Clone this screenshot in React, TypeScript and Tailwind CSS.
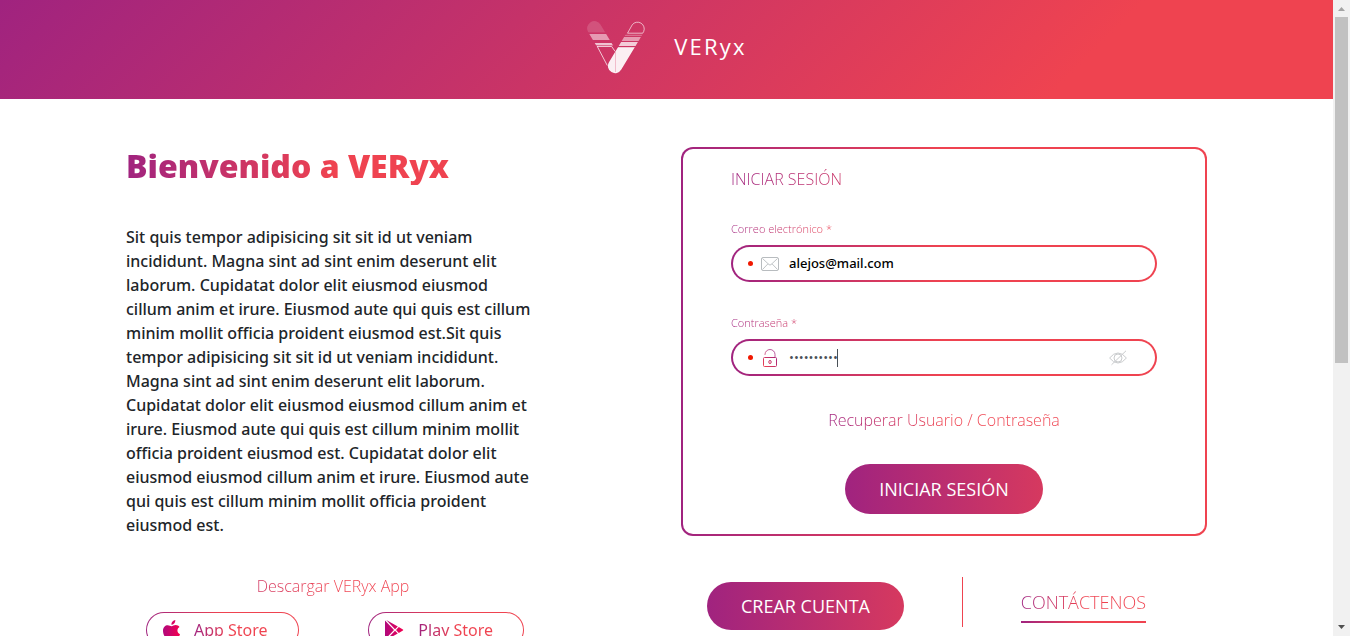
import { ReactNode } from "react";

const gradientText =
  "bg-[linear-gradient(90deg,#a0237f_0%,#ef4350_50%)] bg-clip-text text-transparent";
const gradientBorder =
  "border-transparent [background:linear-gradient(#fff,#fff)_padding-box,linear-gradient(90deg,#a0237f_0%,#ef4350_50%)_border-box]";
const pill =
  "rounded-full bg-[linear-gradient(90deg,#a0237f_0%,#d6395f_100%)] text-lg text-white";

function Logo() {
  return (
    <svg width="60" height="54" viewBox="586 20 60 54" fill="#fff" aria-hidden="true">
      <defs>
        <clipPath id="leftArm">
          <rect x="-7.2" y="-7.2" width="14.4" height="58" rx="7.2" transform="translate(594.3 28.3) rotate(-31)" />
        </clipPath>
        <clipPath id="rightArm">
          <rect x="-7.2" y="-7.2" width="14.4" height="58.4" rx="7.2" transform="translate(637.8 28.2) rotate(31)" />
        </clipPath>
      </defs>
      <g clipPath="url(#leftArm)">
        <rect x="586" y="20" width="60" height="12.4" opacity=".15" />
        <rect x="586" y="34" width="60" height="6" opacity=".5" />
        <rect x="586" y="43" width="60" height="2.4" opacity=".7" />
      </g>
      <path d="M611.7 46.5 615 51.3M597.3 46.5 607.3 65.5M597 46.5H611.7" fill="none" stroke="#fff" strokeWidth=".9" opacity=".8" />
      <g clipPath="url(#rightArm)">
        <rect x="586" y="34.8" width="60" height="1" opacity=".35" />
        <rect x="586" y="37" width="60" height="4" opacity=".5" />
        <rect x="586" y="42" width="60" height="4" opacity=".75" />
        <rect x="586" y="47.2" width="60" height="27" opacity=".92" />
      </g>
      <path
        d="M627.5 33.2 632.3 24.7A6.7 6.7 0 0 1 643.7 31.5L642.7 33.2Z"
        fill="none"
        stroke="#fff"
        strokeWidth=".9"
        opacity=".7"
      />
      <path d="M615.5 52v20" stroke="#d53964" strokeWidth=".8" opacity=".35" />
    </svg>
  );
}

function Envelope() {
  return (
    <svg width="18" height="14" viewBox="0 0 18 14" fill="none" stroke="#b8bcbf" aria-hidden="true">
      <rect x=".5" y=".5" width="17" height="13" rx="1.5" />
      <path d="M1.5 1.5 8 7.6q1 .9 2 0l6.5-6.1M1.5 12.5 7 6.8M16.5 12.5 11 6.8" strokeWidth=".9" />
    </svg>
  );
}

function Lock() {
  return (
    <svg width="14" height="18" viewBox="0 0 14 18" fill="none" stroke="url(#lockTint)" strokeWidth="1" aria-hidden="true">
      <defs>
        <linearGradient id="lockTint" gradientUnits="userSpaceOnUse" x1="0" y1="18" x2="14" y2="6">
          <stop stopColor="#ef4350" />
          <stop offset="1" stopColor="#a0237f" />
        </linearGradient>
      </defs>
      <path d="M2 6V5.5a5 5 0 0 1 10 0V8" opacity=".75" />
      <rect x=".5" y="8.5" width="13" height="9" rx="1" />
      <ellipse cx="7" cy="13" rx="1.2" ry="1.6" />
    </svg>
  );
}

function EyeOff() {
  return (
    <svg width="18" height="16" viewBox="0 0 18 16" fill="none" stroke="#c9cbcd" aria-hidden="true">
      <path d="M.6 8Q4.5 3 9 3t8.4 5Q13.5 13 9 13T.6 8Z" />
      <circle cx="9" cy="8" r="4" />
      <path d="M2.5 14.8 17 .8" />
    </svg>
  );
}

function AppleIcon() {
  return (
    <svg width="17" height="20" viewBox="0 0 17 20" fill="url(#appleTint)" aria-hidden="true">
      <defs>
        <linearGradient id="appleTint">
          <stop stopColor="#b0087c" />
          <stop offset="1" stopColor="#f5004f" />
        </linearGradient>
      </defs>
      <path d="M12.3 0c.2 2.6-1.7 4.7-3.9 4.7C8.2 2.4 10 .3 12.3 0ZM16.5 7c-3 1.800-2.600 5.900.5 7.200-.8 2.300-2.500 5.300-4.400 5.300-1.400 0-1.900-.9-3.600-.9s-2.300.9-3.600.9C3 19.500 0 15 0 10.800 0 7.200 2.300 5.200 4.700 5.200c1.600 0 2.800 1 3.900 1s2.300-1.100 4.200-1.100c1.400 0 2.800.7 3.700 1.900Z" />
    </svg>
  );
}

function PlayIcon() {
  return (
    <svg width="19" height="20" viewBox="0 0 19 20" fill="url(#playTint)" aria-hidden="true">
      <defs>
        <linearGradient id="playTint" gradientUnits="userSpaceOnUse" x1="0" y1="0" x2="19" y2="0">
          <stop stopColor="#b0087c" />
          <stop offset="1" stopColor="#f5004f" />
        </linearGradient>
      </defs>
      <path d="M0 .6 9 10 0 19.4ZM1.3.1 12.8 6.5 10 9.2ZM1.3 19.9 12.8 13.5 10 10.8ZM13.8 7.1 17.9 9.4Q18.6 10 17.9 10.6L13.8 12.9 11 10Z" />
    </svg>
  );
}

function Field({ id, label, children }: { id: string; label: string; children: ReactNode }) {
  return (
    <div className="flex flex-col gap-2">
      <label htmlFor={id} className={`w-1/2 text-[11px] leading-4 font-light ${gradientText}`}>
        {label}
      </label>
      <div className={`flex h-[37px] items-center rounded-full border-2 pr-7 pl-[15px] ${gradientBorder}`}>
        <span className="mr-2 size-[5px] shrink-0 rounded-full bg-[#f01800]" />
        {children}
      </div>
    </div>
  );
}

function StoreLink({ icon, children }: { icon: ReactNode; children: ReactNode }) {
  return (
    <a
      href="#"
      className={`flex h-9 items-center rounded-full border pr-[30px] pl-4 ${gradientBorder}`}
    >
      {icon}
      <span className={`ml-3.5 font-['Noto_Sans','Open_Sans',sans-serif] ${gradientText}`}>{children}</span>
    </a>
  );
}

export default function App() {
  return (
    <div className="flex h-screen overflow-hidden bg-white font-['Open_Sans',sans-serif] text-[#212529]">
      <div className="min-w-0 flex-1 overflow-hidden">
        <header className="flex h-[99px] items-center justify-center gap-7 bg-[linear-gradient(135deg,#a0237f_0%,#ef4350_80%)] pb-1.5">
          <Logo />
          <span className="text-[22px] tracking-widest text-white">VERyx</span>
        </header>

        <main className="mx-auto grid w-full max-w-[1081px] grid-cols-[414fr_526fr] items-start gap-[141px] pt-12">
          <section className="flex flex-col">
            <h1 className={`text-[32px] leading-[38px] font-extrabold ${gradientText}`}>Bienvenido a VERyx</h1>
            <p className="mt-10 pr-1 font-['Noto_Sans','Open_Sans',sans-serif] text-base leading-6 font-medium">
              Sit quis tempor adipisicing sit sit id ut veniam incididunt. Magna sint ad sint enim
              deserunt elit laborum. Cupidatat dolor elit eiusmod eiusmod cillum anim et irure.
              Eiusmod aute qui quis est cillum minim mollit officia proident eiusmod est.Sit quis
              tempor adipisicing sit sit id ut veniam incididunt. Magna sint ad sint enim deserunt
              elit laborum. Cupidatat dolor elit eiusmod eiusmod cillum anim et irure. Eiusmod aute
              qui quis est cillum minim mollit officia proident eiusmod est. Cupidatat dolor elit
              eiusmod eiusmod cillum anim et irure. Eiusmod aute qui quis est cillum minim mollit
              officia proident eiusmod est.
            </p>
            <h2 className={`mt-[37px] text-center text-base leading-6 font-light ${gradientText}`}>
              Descargar VERyx App
            </h2>
            <div className="mt-3.5 flex justify-between pr-4 pl-5">
              <StoreLink icon={<AppleIcon />}>App Store</StoreLink>
              <StoreLink icon={<PlayIcon />}>Play Store</StoreLink>
            </div>
          </section>

          <section className="flex flex-col">
            <form
              onSubmit={(event) => event.preventDefault()}
              className={`flex flex-col rounded-xl border-2 px-12 pt-[18px] pb-5 ${gradientBorder}`}
            >
              <h2 className={`text-base leading-6 font-light ${gradientText}`}>INICIAR SESIÓN</h2>
              <div className="mt-[30px] flex flex-col gap-[33px]">
                <Field id="email" label="Correo electrónico *">
                  <Envelope />
                  <input
                    id="email"
                    type="email"
                    defaultValue="alejos@mail.com"
                    className="ml-2.5 min-w-0 flex-1 bg-transparent font-['Noto_Sans','Open_Sans',sans-serif] text-[13px] font-medium text-black outline-none"
                  />
                </Field>
                <Field id="password" label="Contraseña *">
                  <span className="flex w-[18px] justify-center">
                    <Lock />
                  </span>
                  <div className="relative ml-2.5 flex min-w-0 flex-1 items-center">
                    <input
                      id="password"
                      type="password"
                      defaultValue="1234567890"
                      className="w-full bg-transparent text-[13px] text-[#495057] caret-transparent outline-none"
                    />
                    <span className="absolute left-12 h-[18px] w-px bg-[#495057]" />
                  </div>
                  <button type="button" aria-label="Mostrar contraseña">
                    <EyeOff />
                  </button>
                </Field>
              </div>
              <a href="#" className={`mt-8 self-center text-base leading-6 font-light ${gradientText}`}>
                Recuperar Usuario / Contraseña
              </a>
              <button type="submit" className={`mt-8 h-[50px] self-center px-[34px] ${pill}`}>
                INICIAR SESIÓN
              </button>
            </form>

            <div className="mt-[41px] flex items-start justify-between pr-[61px] pl-[26px]">
              <button type="button" className={`mt-[5px] h-12 px-[34px] ${pill}`}>
                CREAR CUENTA
              </button>
              <span className="h-[50px] w-px shrink-0 bg-[#ef4350]" />
              <a href="#" className="mt-2.5 flex flex-col gap-1 text-lg leading-[30px] font-light">
                <span className={gradientText}>CONTÁCTENOS</span>
                <span className="h-0.5 bg-[linear-gradient(90deg,#a0237f_0%,#ef4350_50%)]" />
              </a>
            </div>
          </section>
        </main>
      </div>

      <div className="flex w-[17px] shrink-0 flex-col items-center bg-[#f1f1f1]" aria-hidden="true">
        <svg width="17" height="17" viewBox="0 0 17 17" fill="#a3a3a3">
          <path d="M5 11h7L8.5 7Z" />
        </svg>
        <span className="h-[346px] w-[13px] bg-[#c1c1c1]" />
        <svg className="mt-auto" width="17" height="17" viewBox="0 0 17 17" fill="#505050">
          <path d="M5 6h7L8.5 10Z" />
        </svg>
      </div>
    </div>
  );
}
